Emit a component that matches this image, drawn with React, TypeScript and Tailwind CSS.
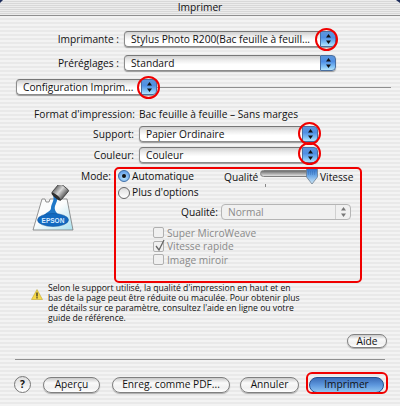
import React from "react";

const Arrows = ({ dim }: { dim?: boolean }) => (
  <svg width="7" height="12" viewBox="0 0 7 12" className="block">
    <path d="M3.5 1 L6 4.5 H1 Z" fill={dim ? "#777" : "#111"} />
    <path d="M3.5 11 L6 7.5 H1 Z" fill={dim ? "#777" : "#111"} />
  </svg>
);

const Blue = () => (
  <div className="w-[16px] h-full rounded-r-[4px] flex items-center justify-center bg-[linear-gradient(180deg,#5d96dc_0%,#4f8fe4_40%,#7fc0f5_75%,#b4e4fb_100%)] border border-[#4a6f9f] shrink-0">
    <Arrows />
  </div>
);

const Popup = ({ text, className }: { text: string; className: string }) => (
  <div className={`h-[16px] flex rounded-[4px] shadow-[0_1px_1px_#999] ${className}`}>
    <div className="flex-1 min-w-0 flex items-center pl-[6px] rounded-l-[4px] border border-r-0 border-[#8c8c8c] border-t-[#777] bg-[linear-gradient(180deg,#d0d0d0_0%,#ececec_30%,#ffffff_60%,#ffffff_100%)] whitespace-nowrap overflow-hidden">
      {text}
    </div>
    <Blue />
  </div>
);

const Label = ({ children, w }: { children: React.ReactNode; w: string }) => (
  <div className={`${w} text-right shrink-0 pr-[5px] whitespace-nowrap`}>{children}</div>
);

const Check = ({ on, label }: { on?: boolean; label: string }) => (
  <div className="h-[13.5px] flex items-center gap-[3px] text-[#8a8a8a]">
    <div className="relative w-[11px] h-[11px] rounded-[2px] border border-[#b0b0b0] bg-[#f0f0f0]">
      {on && (
        <svg width="12" height="13" viewBox="0 0 12 13" className="absolute left-0 top-[-3px]">
          <path d="M2 7 L5 11 L10 1" fill="none" stroke="#666" strokeWidth="1.3" />
        </svg>
      )}
    </div>
    <span>{label}</span>
  </div>
);

const Radio = ({ on, label, h }: { on?: boolean; label: string; h: string }) => (
  <div className={`${h} flex items-center gap-[2px] pl-[2px]`}>
    <div
      className={`w-[12px] h-[12px] rounded-full border flex items-center justify-center ${
        on
          ? "border-[#3d6ea8] bg-[radial-gradient(circle_at_50%_70%,#b5e0fb,#4f8fe4)]"
          : "border-[#666] bg-[linear-gradient(180deg,#ddd,#fff)]"
      }`}
    >
      {on && <div className="w-[4px] h-[4px] rounded-full bg-[#111]" />}
    </div>
    <span>{label}</span>
  </div>
);

const Btn = ({ text, className = "" }: { text: string; className?: string }) => (
  <div className={`rounded-full border border-[#808080] bg-[linear-gradient(180deg,#c9c9c9_0%,#fafafa_35%,#f0f0f0_70%,#ffffff_100%)] shadow-[0_1px_1px_#aaa] flex items-center justify-center whitespace-nowrap ${className}`}>
    {text}
  </div>
);

const Ring = ({ className }: { className: string }) => (
  <div className={`absolute w-[23px] h-[23px] rounded-full border-[2px] border-[#f00000] ${className}`} />
);

const Epson = () => (
  <svg width="42" height="46" viewBox="0 0 42 46" className="block">
    <defs>
      <linearGradient id="pg" x1="0" y1="0" x2="1" y2="1">
        <stop offset="0.45" stopColor="#fbfcfc" />
        <stop offset="1" stopColor="#a9e0ee" />
      </linearGradient>
      <linearGradient id="cup" x1="0" y1="0" x2="1" y2="0">
        <stop offset="0" stopColor="#707070" />
        <stop offset="0.45" stopColor="#d8d8d8" />
        <stop offset="1" stopColor="#5c5c5c" />
      </linearGradient>
    </defs>
    <path d="M10 14 L13 14 L14 17 L17 17 L18 14 L35 14 L41 45 L1 45 Z" fill="url(#pg)" stroke="#7a7a7a" strokeWidth="0.8" />
    <path d="M21 11 C23 15 19 19 19 23 C19 26 15 27 12 30 L27 30 C24 27 22 25 23 21 C24 18 26 15 25 12 Z" fill="#1f77c8" />
    <g transform="rotate(40 28 7)">
      <rect x="22" y="0" width="12" height="13" rx="1.5" fill="url(#cup)" stroke="#3c3c3c" strokeWidth="0.8" />
      <ellipse cx="28" cy="13" rx="6" ry="1.6" fill="#2e2e2e" />
    </g>
    <ellipse cx="21" cy="35" rx="15.5" ry="6.5" fill="#1269c0" stroke="#0d4f96" strokeWidth="0.5" />
    <text x="21" y="37.5" textAnchor="middle" fontSize="6.5" fontWeight="700" fill="#d8ebff" fontFamily="'Liberation Sans',sans-serif">EPSON</text>
  </svg>
);

const Thumb = () => (
  <svg width="14" height="17" viewBox="0 0 14 17" className="absolute left-[189px] top-0">
    <defs>
      <linearGradient id="th" x1="0" y1="0" x2="0" y2="1">
        <stop offset="0" stopColor="#2f6fc4" />
        <stop offset="0.45" stopColor="#6aa6e6" />
        <stop offset="1" stopColor="#d5ecf8" />
      </linearGradient>
    </defs>
    <path d="M1.5 1.5 Q1.5 0.5 3 0.5 H11 Q12.5 0.5 12.5 1.5 V9 L7 16 L1.5 9 Z" fill="url(#th)" stroke="#6f7f90" strokeWidth="0.8" />
    <path d="M3 4 H11 M3 6 H11" stroke="#2a5fa8" strokeWidth="0.6" strokeDasharray="1 1" />
  </svg>
);

export default function App() {
  return (
    <div className="relative w-[400px] h-[406px] overflow-hidden flex flex-col text-[10.2px] leading-none text-[#111] font-['Open_Sans',sans-serif] bg-[repeating-linear-gradient(180deg,#f3f3f3_0px,#f3f3f3_2px,#e9e9e9_2px,#e9e9e9_4px)]">
      <div className="h-[16px] shrink-0 flex items-center justify-center border-b border-[#8f8f8f] bg-[repeating-linear-gradient(180deg,#ececec_0px,#ececec_1px,#d8d8d8_1px,#d8d8d8_2px)]">
        Imprimer
      </div>

      <div className="mt-[15px] h-[16px] flex items-center">
        <Label w="w-[124px]">Imprimante :</Label>
        <Popup text="Stylus Photo R200(Bac feuille à feuill..." className="w-[212px]" />
      </div>
      <div className="mt-[8px] h-[16px] flex items-center">
        <Label w="w-[124px]">Préréglages :</Label>
        <Popup text="Standard" className="w-[212px]" />
      </div>
      <div className="mt-[8px] h-[16px] flex items-center pl-[16px] pr-[9px]">
        <Popup text="Configuration Imprim..." className="w-[141px] shrink-0" />
        <div className="flex-1 h-px bg-[#8f8f8f]" />
      </div>

      <div className="mt-[13px] h-[12px] flex items-center pl-[34px] whitespace-nowrap">
        <span className="w-[105px]">Format d'impression:</span>
        <span>Bac feuille à feuille – Sans marges</span>
      </div>
      <div className="mt-[6px] h-[16px] flex items-center">
        <Label w="w-[139px]">Support:</Label>
        <Popup text="Papier Ordinaire" className="w-[179px]" />
      </div>
      <div className="mt-[5px] h-[16px] flex items-center">
        <Label w="w-[139px]">Couleur:</Label>
        <Popup text="Couleur" className="w-[179px]" />
      </div>

      <div className="mt-[5px] flex h-[115px]">
        <div className="w-[116px] shrink-0 flex flex-col">
          <div className="h-[16px] flex items-center justify-end pr-[5px]">Mode:</div>
          <div className="mt-[1px] pl-[32px]"><Epson /></div>
        </div>
        <div className="flex-1 flex flex-col">
          <div className="relative">
            <Radio on label="Automatique" h="h-[16px]" />
            <span className="absolute left-[108px] top-[4px]">Qualité</span>
            <div className="absolute left-[144px] top-[2px] w-[50px] h-[7px] rounded-l-full border border-[#808080] bg-[linear-gradient(180deg,#6f6f6f,#e0e0e0)]" />
            <div className="absolute left-[149px] top-[16px] w-px h-[3px] bg-[#888]" />
            <Thumb />
            <span className="absolute left-[204px] top-[4px]">Vitesse</span>
          </div>
          <Radio label="Plus d'options" h="h-[17px]" />
          <div className="mt-[3px] h-[16px] flex items-center">
            <div className="w-[105px] text-right pr-[3px]">Qualité:</div>
            <div className="w-[130px] h-[16px] flex items-center justify-between pl-[6px] rounded-[4px] border border-[#b5b5b5] bg-[#f0f0f0] text-[#8a8a8a]">
              Normal
              <div className="h-full w-[15px] border-l border-[#d0d0d0] flex items-center justify-center"><Arrows dim /></div>
            </div>
          </div>
          <div className="mt-[6px] pl-[37px] flex flex-col">
            <Check label="Super MicroWeave" />
            <Check on label="Vitesse rapide" />
            <Check label="Image miroir" />
          </div>
        </div>
      </div>

      <div className="flex pl-[31px]">
        <svg width="12" height="11" viewBox="0 0 12 11" className="mt-[6px] shrink-0">
          <path d="M6 0.5 L11.5 10.5 H0.5 Z" fill="#f6d848" stroke="#b59a20" strokeWidth="0.5" />
          <rect x="5.4" y="3.5" width="1.2" height="4" fill="#222" />
          <rect x="5.4" y="8.2" width="1.2" height="1.2" fill="#222" />
        </svg>
        <p className="ml-[5px] text-[8.65px] leading-[10px] whitespace-nowrap">
          Selon le support utilisé, la qualité d'impression en haut et en<br />
          bas de la page peut être réduite ou maculée. Pour obtenir plus<br />
          de détails sur ce paramètre, consultez l'aide en ligne ou votre<br />
          guide de référence.
        </p>
      </div>

      <div className="mt-[11px] flex justify-end pr-[13px]">
        <Btn text="Aide" className="w-[40px] h-[14px]" />
      </div>
      <div className="mt-[11px] mx-[15px] h-px bg-[#8f8f8f]" />

      <div className="mt-[16px] flex items-center pl-[14px]">
        <div className="w-[17px] h-[17px] rounded-full border border-[#777] bg-[linear-gradient(180deg,#ddd,#fff)] flex items-center justify-center font-bold">?</div>
        <Btn text="Aperçu" className="ml-[12px] w-[57px] h-[16px]" />
        <Btn text="Enreg. comme PDF..." className="ml-[12px] w-[118px] h-[16px]" />
        <Btn text="Annuler" className="ml-[10px] w-[59px] h-[16px]" />
        <div className="ml-[10px] w-[75px] h-[16px] rounded-full border border-[#24508f] bg-[linear-gradient(180deg,#3a6cb8_0%,#5d97dd_50%,#8fc4f0_100%)] flex items-center justify-center font-medium">Imprimer</div>
      </div>

      <Ring className="left-[315px] top-[28px]" />
      <Ring className="left-[137px] top-[76px]" />
      <Ring className="left-[298px] top-[122px]" />
      <Ring className="left-[298px] top-[142px]" />
      <div className="absolute left-[114px] top-[167px] w-[248px] h-[116px] rounded-[5px] border-[2px] border-[#f00000]" />
      <div className="absolute left-[306px] top-[372px] w-[82px] h-[22px] rounded-[6px] border-[2px] border-[#f00000]" />
      <div className="absolute left-0 top-0 w-[3px] h-[3px] bg-[#1c2c5c] [clip-path:polygon(0_0,100%_0,0_100%)]" />
      <div className="absolute right-0 top-0 w-[4px] h-[3px] bg-[#1c2c5c] [clip-path:polygon(0_0,100%_0,100%_100%)]" />
    </div>
  );
}
